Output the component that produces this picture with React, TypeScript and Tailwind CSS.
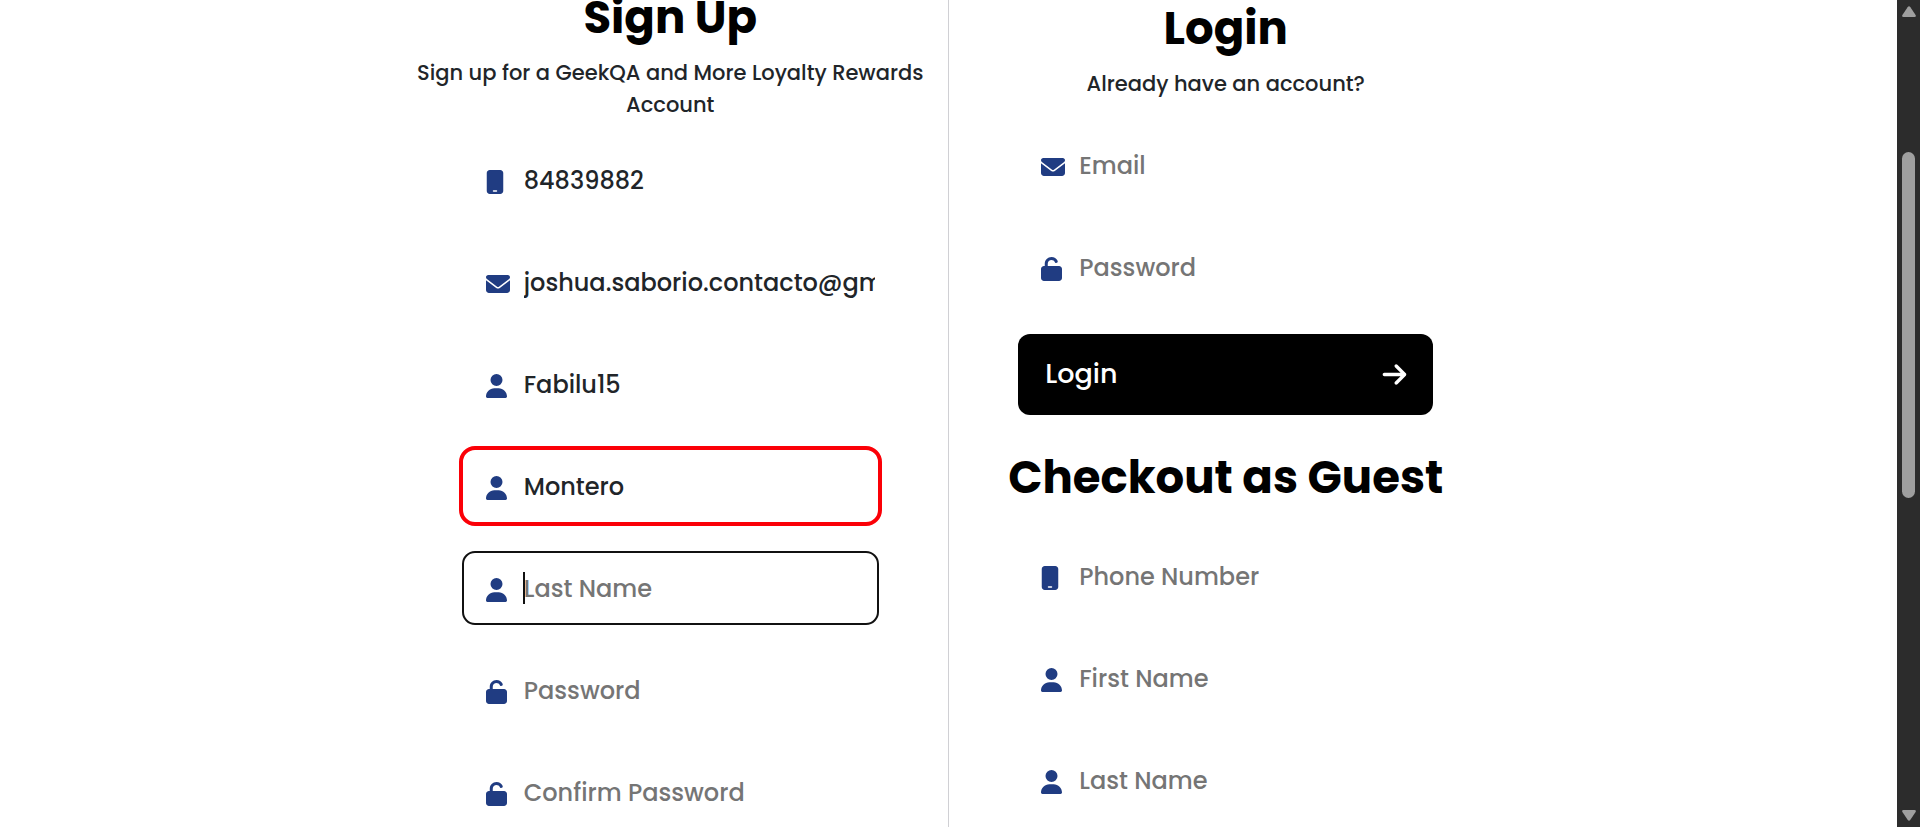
import type { ReactNode } from "react";
import {
  FaArrowRight,
  FaEnvelope,
  FaMobile,
  FaUnlock,
  FaUser,
} from "react-icons/fa6";

type FieldProps = {
  id: string;
  label: string;
  icon: ReactNode;
  type?: string;
  value?: string;
  state?: "idle" | "error" | "active";
};

const outlines = {
  idle: "",
  error: "outline-4 outline-[#fb0007]",
  active: "outline-2 -outline-offset-1 outline-[#111111]",
};

function Field({
  id,
  label,
  icon,
  type = "text",
  value,
  state = "idle",
}: FieldProps) {
  return (
    <div
      className={`relative flex h-[72px] w-full items-center rounded-xl pr-[3px] pl-[23px] ${outlines[state]}`}
    >
      <label htmlFor={id} className="w-[38px] shrink-0 pt-1 text-2xl text-[#203c82]">
        {icon}
      </label>
      {state === "active" && (
        <span className="absolute left-[60px] h-8 w-0.5 bg-[#111111]" />
      )}
      <input
        id={id}
        type={type}
        aria-label={label}
        placeholder={label}
        defaultValue={value}
        className="h-10 min-w-0 flex-1 bg-transparent text-2xl font-medium text-[#212529] outline-none placeholder:text-[#757575]"
      />
    </div>
  );
}

function Heading({ children }: { children: ReactNode }) {
  return (
    <h2 className="text-center text-[45px] leading-[58px] font-bold whitespace-nowrap text-black">
      {children}
    </h2>
  );
}

function Subtitle({ children }: { children: ReactNode }) {
  return (
    <p className="mt-2.5 text-center text-[21px] leading-8 font-medium text-[#212529]">
      {children}
    </p>
  );
}

function Scrollbar() {
  return (
    <div
      aria-hidden="true"
      className="flex w-[23px] shrink-0 flex-col items-center justify-between bg-[#2c2c2c] py-1.5"
    >
      <svg viewBox="0 0 14 11" className="h-[11px] w-3.5 fill-[#9f9f9f]">
        <path d="M5.6 1.2Q7-.6 8.4 1.2L13.6 9Q14.4 11 12.6 11H1.4Q-.4 11 .4 9Z" />
      </svg>
      <div className="flex w-full flex-1 flex-col items-center">
        <div className="basis-[17%]" />
        <div className="w-[13px] basis-[346px] rounded-full bg-[#9f9f9f]" />
      </div>
      <svg viewBox="0 0 14 11" className="h-[11px] w-3.5 fill-[#9f9f9f]">
        <path d="M5.6 9.8Q7 11.6 8.4 9.8L13.6 2Q14.4 0 12.6 0H1.4Q-.4 0 .4 2Z" />
      </svg>
    </div>
  );
}

export default function App() {
  return (
    <div className="flex h-screen overflow-hidden bg-white font-[Poppins,Inter,sans-serif]">
      <main className="min-w-0 flex-1 pr-px">
        <div className="mx-auto flex max-w-[1110px]">
          <section className="flex-1 border-r border-[#d0d0d4] px-4">
            <div className="-mt-[11px]">
              <Heading>Sign Up</Heading>
              <Subtitle>
                Sign up for a GeekQA and More Loyalty Rewards Account
              </Subtitle>
            </div>
            <form className="mx-auto mt-[23px] flex max-w-[415px] flex-col gap-[30px] pb-12">
              <Field id="su-phone" label="Phone Number" icon={<FaMobile className="w-[18px]" />} value="84839882" />
              <Field
                id="su-email"
                label="Email"
                icon={<FaEnvelope />}
                value="joshua.saborio.contacto@gmail.com"
              />
              <Field id="su-user" label="Username" icon={<FaUser className="w-[21px]" />} value="Fabilu15" />
              <Field
                id="su-first"
                label="First Name"
                icon={<FaUser className="w-[21px]" />}
                value="Montero"
                state="error"
              />
              <Field id="su-last" label="Last Name" icon={<FaUser className="w-[21px]" />} state="active" />
              <Field id="su-pass" label="Password" icon={<FaUnlock className="w-[21px]" />} type="password" />
              <Field
                id="su-confirm"
                label="Confirm Password"
                icon={<FaUnlock className="w-[21px]" />}
                type="password"
              />
            </form>
          </section>
          <section className="flex-1 px-4">
            <Heading>Login</Heading>
            <Subtitle>Already have an account?</Subtitle>
            <form className="mx-auto mt-[29px] flex max-w-[415px] flex-col">
              <div className="flex flex-col gap-[30px]">
                <Field id="li-email" label="Email" icon={<FaEnvelope />} />
                <Field id="li-pass" label="Password" icon={<FaUnlock className="w-[21px]" />} type="password" />
              </div>
              <button
                type="button"
                className="mt-[31px] flex h-[81px] items-center justify-between rounded-xl bg-black pr-[25px] pl-[27px] text-[27px] font-medium text-white"
              >
                Login
                <FaArrowRight />
              </button>
            </form>
            <div className="mt-[34px]">
              <Heading>Checkout as Guest</Heading>
            </div>
            <form className="mx-auto mt-[33px] flex max-w-[415px] flex-col gap-[30px]">
              <Field id="gu-phone" label="Phone Number" icon={<FaMobile className="w-[18px]" />} />
              <Field id="gu-first" label="First Name" icon={<FaUser className="w-[21px]" />} />
              <Field id="gu-last" label="Last Name" icon={<FaUser className="w-[21px]" />} />
            </form>
          </section>
        </div>
      </main>
      <Scrollbar />
    </div>
  );
}
